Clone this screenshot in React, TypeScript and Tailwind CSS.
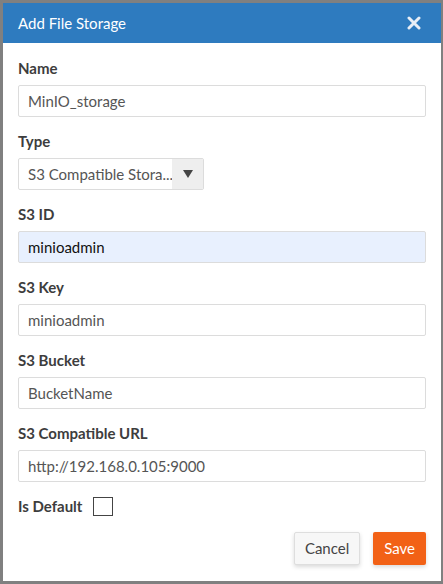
import { useState } from 'react';

const fields = [
    { label: 'S3 ID', value: 'minioadmin', autofill: true },
    { label: 'S3 Key', value: 'minioadmin' },
    { label: 'S3 Bucket', value: 'BucketName' },
    { label: 'S3 Compatible URL', value: 'http://192.168.0.105:9000' },
];

function Field({ label, children }: { label: string; children: React.ReactNode }) {
    return (
        <div className="mb-[14px]">
            <label className="block h-5 leading-5 mb-[7px] text-[15px] font-bold text-[#3d3d3d]">{label}</label>
            {children}
        </div>
    );
}

export default function App() {
    const [name, setName] = useState('MinIO_storage');
    const [isDefault, setIsDefault] = useState(false);

    return (
        <div
            className="w-[443px] h-[584px] bg-[#808080] pt-[3px] pl-[3px] pr-[2px] pb-[3px]"
            style={{ fontFamily: 'Lato, "Open Sans", sans-serif' }}
        >
            <div className="flex flex-col h-full bg-white">
                {/* Header */}
                <div className="flex items-center justify-between h-10 px-[15px] bg-[#2e7bbf] text-white">
                    <h2 className="text-[15px] font-normal">Add File Storage</h2>
                    <button className="mr-[5px] text-white">
                        <svg width="14" height="14" viewBox="0 0 14 14">
                            <path d="M2 2 L12 12 M12 2 L2 12" stroke="#e8eef6" strokeWidth="3" strokeLinecap="round" />
                        </svg>
                    </button>
                </div>

                {/* Body */}
                <div className="flex-1 pt-[15px] px-[15px]">
                    <Field label="Name">
                        <input
                            value={name}
                            onChange={e => setName(e.target.value)}
                            className="block w-full h-8 px-[9px] border border-[#dcdcdc] rounded-[2px] text-[15px] text-[#555] outline-none"
                        />
                    </Field>
                    <Field label="Type">
                        <div className="flex w-[186px] h-8 border border-[#dcdcdc] rounded-[2px] overflow-hidden">
                            <div className="flex-1 pl-[9px] leading-[30px] text-[15px] text-[#555] whitespace-nowrap overflow-hidden">S3 Compatible Stora...</div>
                            <div className="flex items-center justify-center w-[31px] shrink-0 bg-[#eeeeee]">
                                <svg width="10" height="8" viewBox="0 0 10 8">
                                    <path d="M0 0 H10 L5 8 Z" fill="#444" />
                                </svg>
                            </div>
                        </div>
                    </Field>
                    {fields.map(f => (
                        <Field key={f.label} label={f.label}>
                            <input
                                defaultValue={f.value}
                                className={`block w-full h-8 px-[9px] border border-[#dcdcdc] rounded-[2px] text-[15px] outline-none ${f.autofill ? 'bg-[#e8f0fe] text-[#111]' : 'bg-white text-[#555]'}`}
                            />
                        </Field>
                    ))}
                    <div className="flex items-center h-5 mt-[1px]">
                        <span className="text-[15px] font-bold text-[#3d3d3d]">Is Default</span>
                        <button
                            onClick={() => setIsDefault(!isDefault)}
                            className="ml-[11px] w-[20px] h-[19px] border border-[#444] bg-white"
                        />
                    </div>
                    <div className="flex justify-end gap-[13px] mt-[16px]">
                        <button className="h-[33px] px-[10px] bg-[#f7f7f7] border border-[#dedede] rounded-[2px] shadow-[0_2px_4px_rgba(0,0,0,0.15)] text-[15px] text-[#444]">
                            Cancel
                        </button>
                        <button className="h-[33px] px-[11px] bg-[#f26116] rounded-[2px] shadow-[0_2px_4px_rgba(0,0,0,0.15)] text-[15px] text-white">
                            Save
                        </button>
                    </div>
                </div>
            </div>
        </div>
    );
}
